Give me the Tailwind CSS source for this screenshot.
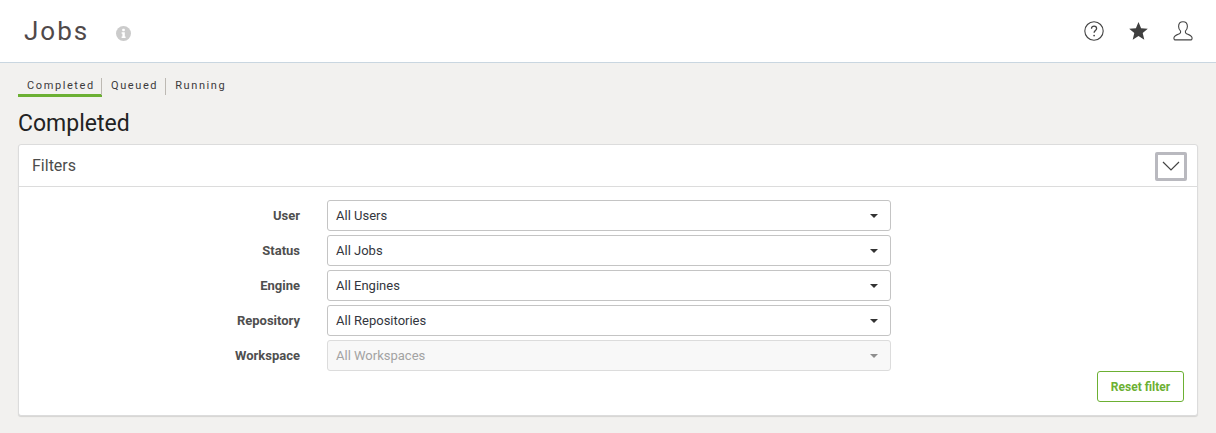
<!DOCTYPE html>
<html lang="en">
<head>
    <meta charset="UTF-8">
    <title>Jobs</title>
    <script src="https://cdn.jsdelivr.net/npm/@tailwindcss/browser@4"></script>
</head>
<body class="bg-[#f2f1ef] h-[433px] overflow-hidden font-[Roboto,sans-serif]">
    <!-- Top bar -->
    <header class="h-[63px] bg-white border-b border-[#c9d6e0] flex items-center justify-between pl-6 pr-[23px]">
        <div class="flex items-center">
            <h1 class="text-[26px] leading-none tracking-[2px] text-[#50494a] font-normal">Jobs</h1>
            <svg class="ml-[27px] mt-1 w-[15px] h-[15px]" viewBox="0 0 15 15"><circle cx="7.5" cy="7.5" r="7.5" fill="#cbcbcb"/><rect x="6.2" y="2.8" width="2.6" height="2.4" rx=".6" fill="#fff"/><path d="M5.6 6.3h3.2v4.2h.8v1.4H5.6v-1.4h.8V7.7h-.8z" fill="#fff"/></svg>
        </div>
        <div class="flex items-center gap-[25px]">
            <svg class="w-5 h-5" viewBox="0 0 20 20" fill="none" stroke="#444"><circle cx="10" cy="10" r="9.2" stroke-width="1.1"/><path d="M7.5 7.7c0-1.6 1.1-2.6 2.6-2.6s2.5 1 2.5 2.3c0 2-2.5 2.1-2.5 4.3" stroke-width="1.3"/><circle cx="10.1" cy="14.6" r=".9" fill="#444" stroke="none"/></svg>
            <svg class="w-[19px] h-[18px]" viewBox="0 0 19 18"><path d="M9.5 0l2.6 6.2 6.7.5-5.1 4.4 1.6 6.6-5.8-3.6-5.8 3.6 1.6-6.6L.2 6.7l6.7-.5z" fill="#3f3f3f"/></svg>
            <svg class="w-5 h-5" viewBox="0 0 20 20" fill="none" stroke="#444" stroke-width="1.1"><path d="M10 .8c-2.9 0-4.4 2.1-4.4 4.8 0 2 .8 3.5 2 4.5.3 1.3-.2 2.1-1.2 2.6-2 .9-5 1.6-5.4 3.8-.2 1 .1 2.4 1 2.4h16c.9 0 1.2-1.4 1-2.4-.4-2.2-3.4-2.9-5.4-3.8-1-.5-1.5-1.3-1.2-2.6 1.2-1 2-2.5 2-4.5C14.4 2.900 12.900.8 10 .8z"/></svg>
        </div>
    </header>

    <main class="px-[18px]">
        <!-- Tabs -->
        <nav class="flex items-center mt-[15px] text-[11px] leading-4 tracking-[1.6px] text-[#3c3a3c]">
            <a class="w-[84px] h-[19px] pl-[9px] border-b-[3px] border-[#6cb033]">Completed</a>
            <span class="w-px h-[17px] -ml-px -mt-0.5 bg-[#bdb9b3]"></span>
            <a class="h-[19px] pl-[9px] pr-[7px] -mt-0">Queued</a>
            <span class="w-px h-[17px] -mt-0.5 bg-[#bdb9b3]"></span>
            <a class="h-[19px] pl-[9px]">Running</a>
        </nav>

        <h2 class="mt-[13px] text-[23px] leading-[27px] font-normal text-[#222]">Completed</h2>

        <!-- Filters card -->
        <section class="mt-[7px] bg-white border border-[#dcdcdc] rounded-[3px] shadow-[0_1px_1px_rgba(0,0,0,0.12)]">
            <div class="h-[42px] border-b border-[#dcdcdc] flex items-center justify-between pl-[13px] pr-[10px]">
                <span class="text-base text-[#4c4c4c]">Filters</span>
                <button class="w-[32px] h-[29px] border-[3px] border-[#b9b9bf] rounded-[2px] flex items-center justify-center mt-[1px]">
                    <svg class="w-[18px] h-[10px]" viewBox="0 0 18 10" fill="none" stroke="#444" stroke-width="1.2"><path d="M1 1l8 8 8-8"/></svg>
                </button>
            </div>

            <div class="pt-[13px] pb-[13px] pr-[13px]">
                <div class="flex flex-col gap-1">
                    <div class="flex items-center h-[31px]">
                        <label class="w-[281px] text-right text-[13px] font-bold text-[#4f4f4f]">User</label>
                        <div class="ml-[27px] w-[564px] h-[31px] border border-[#c4c4c4] rounded-[3px] flex items-center justify-between pl-2 pr-[12px] text-[13px] text-[#33363d]">All Users<span class="border-x-4 border-x-transparent border-t-4 border-t-[#333]"></span></div>
                    </div>
                    <div class="flex items-center h-[31px]">
                        <label class="w-[281px] text-right text-[13px] font-bold text-[#4f4f4f]">Status</label>
                        <div class="ml-[27px] w-[564px] h-[31px] border border-[#c4c4c4] rounded-[3px] flex items-center justify-between pl-2 pr-[12px] text-[13px] text-[#33363d]">All Jobs<span class="border-x-4 border-x-transparent border-t-4 border-t-[#333]"></span></div>
                    </div>
                    <div class="flex items-center h-[31px]">
                        <label class="w-[281px] text-right text-[13px] font-bold text-[#4f4f4f]">Engine</label>
                        <div class="ml-[27px] w-[564px] h-[31px] border border-[#c4c4c4] rounded-[3px] flex items-center justify-between pl-2 pr-[12px] text-[13px] text-[#33363d]">All Engines<span class="border-x-4 border-x-transparent border-t-4 border-t-[#333]"></span></div>
                    </div>
                    <div class="flex items-center h-[31px]">
                        <label class="w-[281px] text-right text-[13px] font-bold text-[#4f4f4f]">Repository</label>
                        <div class="ml-[27px] w-[564px] h-[31px] border border-[#c4c4c4] rounded-[3px] flex items-center justify-between pl-2 pr-[12px] text-[13px] text-[#33363d]">All Repositories<span class="border-x-4 border-x-transparent border-t-4 border-t-[#333]"></span></div>
                    </div>
                    <div class="flex items-center h-[31px]">
                        <label class="w-[281px] text-right text-[13px] font-bold text-[#4f4f4f]">Workspace</label>
                        <div class="ml-[27px] w-[564px] h-[31px] border border-[#dcdcdc] bg-[#f8f8f8] rounded-[3px] flex items-center justify-between pl-2 pr-[12px] text-[13px] text-[#a3a3a3]">All Workspaces<span class="border-x-4 border-x-transparent border-t-4 border-t-[#8e8e8e]"></span></div>
                    </div>
                </div>
                <div class="flex justify-end">
                    <button class="w-[87px] h-[31px] border border-[#6cb033] rounded-[3px] text-xs font-bold text-[#6cb033]">Reset filter</button>
                </div>
            </div>
        </section>
    </main>
</body>
</html>
